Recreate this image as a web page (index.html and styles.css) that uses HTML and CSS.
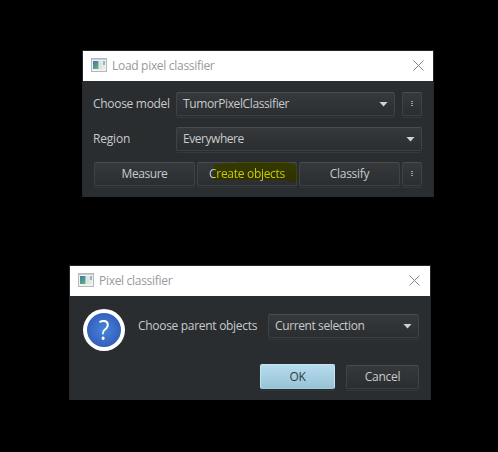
FILE: index.html
```html
<!DOCTYPE html>
<html lang="en">
<head>
<meta charset="utf-8">
<title>Pixel classifier</title>
<link rel="stylesheet" href="styles.css">
</head>
<body>
<svg class="defs" width="0" height="0">
  <defs>
    <linearGradient id="pane" x1="0" y1="0" x2=".6" y2="1"><stop offset="0" stop-color="#4774a2"/><stop offset="1" stop-color="#58b083"/></linearGradient>
    <radialGradient id="blue"><stop offset="0" stop-color="#4686d8"/><stop offset="1" stop-color="#355fbd"/></radialGradient>
    <symbol id="app" viewBox="0 0 16 14">
      <rect x=".5" y=".5" width="15" height="13" fill="#f0f1f2" stroke="#b4b9bd"/>
      <path d="M1 1.5h14" stroke="#c9ced2"/>
      <rect x="2" y="3" width="5.5" height="8" fill="url(#pane)"/>
      <rect x="8" y="3" width="3.5" height="8" fill="#e0e2e4"/>
      <rect x="12" y="3" width="2" height="4" fill="#8fb9c2"/>
      <rect x="12" y="7" width="2" height="4" fill="#e8e9ea"/>
    </symbol>
    <symbol id="close" viewBox="0 0 11 11"><path d="M.5 .5l10 10M10.5 .5l-10 10" stroke="#858585" fill="none"/></symbol>
  </defs>
</svg>
<main>
  <section class="dialog load">
    <header><svg class="app"><use href="#app"/></svg><span class="title">Load pixel classifier</span><svg class="close"><use href="#close"/></svg></header>
    <div class="body">
      <div class="row"><label>Choose model</label><div class="control combo"><span class="model-name">TumorPixelClassifier</span><i class="arrow"></i></div><button class="control more"><i></i></button></div>
      <div class="row"><label class="region">Region</label><div class="control combo"><span class="region-name">Everywhere</span><i class="arrow"></i></div></div>
      <div class="actions">
        <button class="control measure"><span>Measure</span></button>
        <button class="control create"><span>Create objects</span><svg class="marker" viewBox="0 0 83 24"><path d="M0 2Q10 1 23 1V0H73Q77 2 83 3V20H74V19Q70 18 65 18H0Z" fill="#ffff00"/></svg></button>
        <button class="control"><span>Classify</span></button>
        <button class="control more"><i></i></button>
      </div>
    </div>
  </section>
  <section class="dialog parent">
    <header><svg class="app"><use href="#app"/></svg><span class="title">Pixel classifier</span><svg class="close"><use href="#close"/></svg></header>
    <div class="body">
      <div class="question-row">
        <div class="question"><svg viewBox="0 0 42 42"><circle cx="21" cy="21" r="21" fill="#fff"/><circle cx="21" cy="21" r="17" fill="url(#blue)"/></svg><b>?</b></div>
        <label>Choose parent objects</label>
        <div class="control combo"><span class="selection-name">Current selection</span><i class="arrow"></i></div>
      </div>
      <div class="answers"><button class="control ok"><span>OK</span></button><button class="control cancel"><span>Cancel</span></button></div>
    </div>
  </section>
</main>
</body>
</html>
```
FILE: styles.css
```css
* { box-sizing: border-box; }
body { margin: 0; background: #000; color: #c8cacb; font: 12px/16px "Open Sans", "Noto Sans", sans-serif; letter-spacing: -.3px; }
.defs { display: block; height: 0; }
main { height: 452px; overflow: hidden; padding-top: 50px; }
.dialog { background: #2a2d30; border: 1px solid #25282a; border-bottom: 0; }
.load { width: 352px; height: 147px; margin-left: 82px; }
.parent { width: 362px; height: 135px; margin: 68px 0 0 69px; }
header { height: 30px; background: #fff; display: flex; align-items: center; padding: 0 9px 0 8px; color: #999; }
.parent header { padding-right: 10px; }
.app { width: 16px; height: 14px; margin: -2px 5px 0 0; }
.close { width: 11px; height: 11px; margin: -2px 0 0 auto; }
span, label { white-space: nowrap; }
.region { letter-spacing: -.18px; }
.model-name, .selection-name { letter-spacing: -.39px; }
.region-name, .measure { letter-spacing: -.45px; }
.load .body { padding: 11px 11px 0 10px; }
.row { display: flex; align-items: center; height: 24px; margin-bottom: 11px; }
.row label { width: 83px; flex: none; }
.control { position: relative; height: 24px; margin: 0; padding: 0; border: 1px solid #3f4345; border-top-color: #484c4e; border-bottom-color: #3c4042; border-radius: 2px; background: linear-gradient(#35393b, #2b2e30); color: inherit; font: inherit; letter-spacing: inherit; box-shadow: 0 1px 0 #292c2e, 0 2px 0 #34383a; display: flex; align-items: center; justify-content: center; }
.combo { flex: 1; justify-content: space-between; padding: 0 6px; }
.arrow { width: 9px; height: 5px; background: #d0d1d2; clip-path: polygon(0 0, 100% 0, 50% 100%); }
.more { width: 20px; margin-left: 7px; }
.more i { width: 2px; height: 5px; margin-top: -1px; background: repeating-linear-gradient(#97999a 0 1px, transparent 1px 2px); }
.actions { display: grid; grid-template-columns: 101px 100px 101px 20px; gap: 2px; margin-left: 1px; }
.actions .more { margin: 0; width: 20px; }
.actions .measure { letter-spacing: -.45px; }
.marker { position: absolute; left: 16px; top: -1px; width: 83px; height: 24px; mix-blend-mode: multiply; }
.create { isolation: isolate; }
.parent .body { padding: 13px 11px 0 13px; }
.question-row { display: flex; height: 42px; }
.question { position: relative; width: 42px; height: 42px; flex: none; }
.question svg { width: 42px; height: 42px; display: block; }
.question b { position: absolute; inset: 0; text-align: center; color: #fff; font: 28px/41px "Open Sans", sans-serif; transform: scaleX(.88); }
.question-row label { width: 130px; margin: 9px 0 0 13px; flex: none; }
.question-row .combo { margin-top: 5px; }
.answers { display: flex; justify-content: flex-end; gap: 11px; margin-top: 13px; }
.ok { width: 75px; height: 25px; background: linear-gradient(#b6dced, #98c3d7); border-color: #c3e5f2; border-bottom-color: #a1cada; color: #303a40; }
.cancel { width: 73px; margin-top: 1px; }
```
